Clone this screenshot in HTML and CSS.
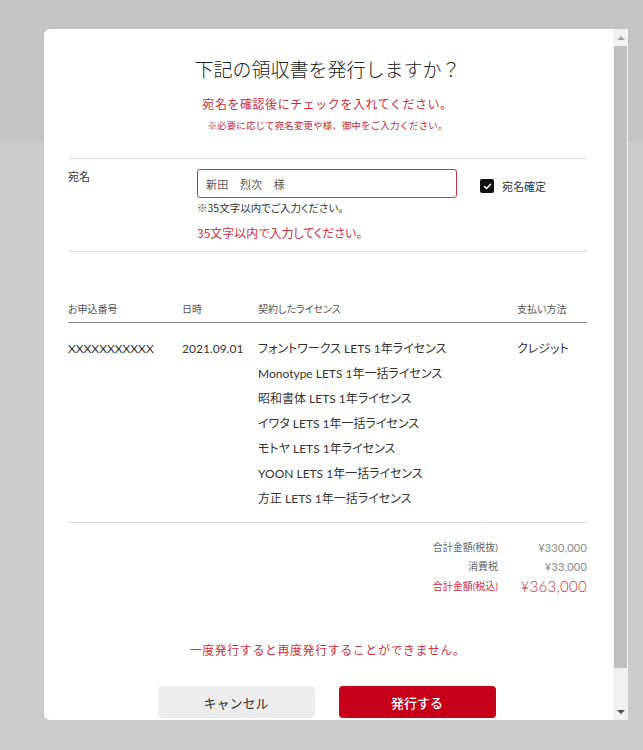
FILE: index.html
```html
<!DOCTYPE html>
<html lang="ja">
<head>
<meta charset="utf-8">
<title>領収書の発行</title>
<link rel="stylesheet" href="styles.css">
</head>
<body>
<div class="modal">
  <div class="modal-body">
    <h1 class="title">下記の領収書を発行しますか？</h1>
    <p class="lead">宛名を確認後にチェックを入れてください。</p>
    <p class="lead-note">※必要に応じて宛名変更や様、御中をご入力ください。</p>

    <div class="name-section">
      <div class="name-label">宛名</div>
      <div class="name-field">
        <div class="name-row">
          <div class="input">新田　烈次　様</div>
          <label class="confirm">
            <span class="checkbox"><svg width="9" height="9" viewBox="0 0 9 9"><path d="M1.6 4.6 L3.6 6.5 L7.5 2.3" fill="none" stroke="#fff" stroke-width="1.5" stroke-linecap="round" stroke-linejoin="round"/></svg></span>
            <span>宛名確定</span>
          </label>
        </div>
        <div class="hint">※35文字以内でご入力ください。</div>
        <div class="error">35文字以内で入力してください。</div>
      </div>
    </div>

    <div class="orders">
      <div class="th">お申込番号</div>
      <div class="th">日時</div>
      <div class="th">契約したライセンス</div>
      <div class="th">支払い方法</div>

      <div class="td">XXXXXXXXXXX</div>
      <div class="td">2021.09.01</div>
      <div class="td licenses">
        <div>フォントワークス LETS 1年ライセンス</div>
        <div>Monotype LETS 1年一括ライセンス</div>
        <div>昭和書体 LETS 1年ライセンス</div>
        <div>イワタ LETS 1年一括ライセンス</div>
        <div>モトヤ LETS 1年ライセンス</div>
        <div>YOON LETS 1年一括ライセンス</div>
        <div>方正 LETS 1年一括ライセンス</div>
      </div>
      <div class="td">クレジット</div>
    </div>

    <div class="totals">
      <div class="t-label">合計金額(税抜)</div>
      <div class="t-value">¥330,000</div>
      <div class="t-label">消費税</div>
      <div class="t-value">¥33,000</div>
      <div class="t-label grand">合計金額(税込)</div>
      <div class="t-value grand">¥363,000</div>
    </div>

    <p class="warning">一度発行すると再度発行することができません。</p>

    <div class="actions">
      <button class="btn btn-cancel">キャンセル</button>
      <button class="btn btn-issue">発行する</button>
    </div>
  </div>
  <div class="scrollbar">
    <div class="sb-btn"><span class="arrow-up"></span></div>
    <div class="sb-thumb"></div>
    <div class="sb-track"></div>
    <div class="sb-btn"><span class="arrow-down"></span></div>
  </div>
</div>
</body>
</html>
```
FILE: styles.css
```css
* { box-sizing: border-box; }

body {
  margin: 0;
  height: 750px;
  overflow: hidden;
  background: linear-gradient(#c4c4c4 0, #c4c4c4 142px, #cbcbcb 142px);
  font-family: "Lato", "Noto Sans CJK JP", sans-serif;
  color: #333;
}

.modal {
  margin: 29px 0 0 44px;
  width: 584px;
  height: 691px;
  display: flex;
  background: #fff;
  border-radius: 6px 0 0 6px;
  overflow: hidden;
}

.modal-body {
  flex: 1;
  min-width: 0;
  padding: 26px 26px 40px 24px;
  overflow: hidden;
}

.title {
  margin: 0;
  text-align: center;
  font-family: "Noto Sans CJK JP", sans-serif;
  font-weight: 300;
  font-size: 19px;
  line-height: 28px;
  color: #222;
}

.lead {
  margin: 12px 0 0;
  text-align: center;
  font-family: "Noto Sans CJK JP", sans-serif;
  font-size: 12px;
  line-height: 18px;
  letter-spacing: 0.55px;
  color: #cc2f3d;
}

.lead-note {
  margin: 5px 0 0;
  text-align: center;
  font-family: "Noto Sans CJK JP", sans-serif;
  font-size: 9.5px;
  line-height: 14px;
  letter-spacing: 0.1px;
  color: #c02a38;
}

.name-section {
  margin-top: 26px;
  border-top: 1px solid #ddd;
  border-bottom: 1px solid #ddd;
  padding: 10px 0 9px;
  display: flex;
}

.name-label {
  width: 129px;
  font-family: "Noto Sans CJK JP", sans-serif;
  font-size: 11px;
  line-height: 14px;
  color: #333;
}

.name-field { flex: 1; }

.name-row {
  display: flex;
  align-items: center;
}

.input {
  width: 260px;
  height: 29px;
  border: 1px solid #c23a48;
  border-radius: 3px;
  padding: 0 8px;
  display: flex;
  align-items: center;
  font-family: "Noto Sans CJK JP", sans-serif;
  font-size: 11px;
  letter-spacing: 0.3px;
  color: #555;
}

.confirm {
  margin-left: 23px;
  margin-top: 5px;
  display: flex;
  align-items: center;
  gap: 8px;
  font-family: "Noto Sans CJK JP", sans-serif;
  font-size: 11px;
  color: #333;
}

.checkbox {
  width: 14px;
  height: 14px;
  border-radius: 2px;
  background: #111;
  display: flex;
  align-items: center;
  justify-content: center;
}

.checkbox svg { display: block; }

.hint {
  margin-top: 2px;
  font-family: "Noto Sans CJK JP", sans-serif;
  font-size: 10.5px;
  line-height: 16px;
  font-feature-settings: "palt";
  color: #333;
}

.error {
  margin-top: 8px;
  font-family: "Noto Sans CJK JP", sans-serif;
  font-size: 12px;
  line-height: 18px;
  font-feature-settings: "palt";
  color: #cc2f3d;
}

.orders {
  margin-top: 50px;
  display: grid;
  grid-template-columns: 114px 76px 1fr 70px;
  border-bottom: 1px solid #ddd;
}

.th {
  font-size: 10px;
  line-height: 14px;
  color: #555;
  padding-bottom: 6px;
  border-bottom: 1px solid #888;
  font-feature-settings: "palt";
}

.td {
  padding: 13px 0 11px;
  font-size: 12px;
  line-height: 25px;
  color: #333;
  font-feature-settings: "palt";
}

.totals {
  margin-top: 15px;
  display: grid;
  grid-template-columns: auto 89px;
  justify-content: end;
  align-items: center;
}

.t-label {
  text-align: right;
  font-size: 10px;
  line-height: 19px;
  color: #666;
  font-feature-settings: "palt";
}

.t-value {
  text-align: right;
  font-size: 11px;
  line-height: 19px;
  color: #888;
  letter-spacing: 0.2px;
}

.t-label.grand { color: #cc2f3d; line-height: 21px; }
.t-value.grand { color: #cc2f3d; font-size: 15px; line-height: 21px; font-weight: 300; letter-spacing: 0.3px; }

.warning {
  margin: 44px 0 0;
  text-align: center;
  font-family: "Noto Sans CJK JP", sans-serif;
  font-size: 12px;
  line-height: 18px;
  letter-spacing: 0.55px;
  color: #cc2f3d;
}

.actions {
  margin-top: 27px;
  display: flex;
  justify-content: center;
  gap: 24px;
  padding-right: 2px;
}

.btn {
  width: 157px;
  height: 32px;
  border: none;
  border-radius: 4px;
  font-family: "Noto Sans CJK JP", sans-serif;
  font-size: 13px;
  padding: 0;
}

.btn-cancel { background: #ececec; color: #333; }
.btn-issue { background: #c50018; color: #fff; font-weight: 500; }

.scrollbar {
  width: 15px;
  background: #f1f1f1;
  display: flex;
  flex-direction: column;
}

.sb-btn {
  height: 17px;
  display: flex;
  align-items: center;
  justify-content: center;
}

.sb-thumb {
  height: 622px;
  margin: 0 1px;
  background: #c1c1c1;
}

.sb-track { flex: 1; }

.arrow-up {
  width: 0;
  height: 0;
  border-left: 4px solid transparent;
  border-right: 4px solid transparent;
  border-bottom: 4px solid #a3a3a3;
}

.arrow-down {
  width: 0;
  height: 0;
  border-left: 4px solid transparent;
  border-right: 4px solid transparent;
  border-top: 4px solid #505050;
}
```
